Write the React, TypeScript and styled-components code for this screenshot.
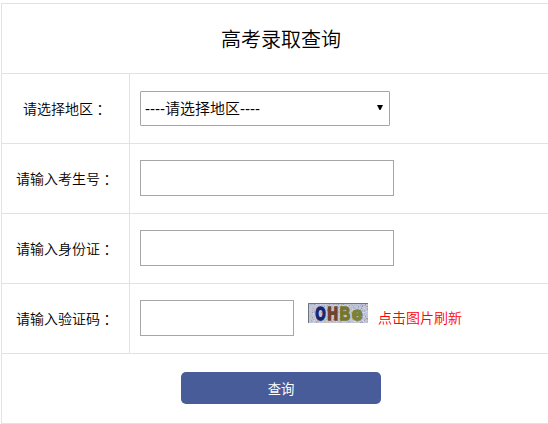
import React from "react";
import styled, { createGlobalStyle } from "styled-components";

const GlobalStyle = createGlobalStyle`
  body {
    margin: 0;
    background: #fff;
    color: #000;
    font-family: "Noto Sans CJK SC", sans-serif;
    font-size: 14px;
    overflow: hidden;
  }
  *, *::before, *::after { box-sizing: border-box; }
`;

const Form = styled.form`
  width: 560px;
  margin: 3px 0 0 1px;
  border: 1px solid #dce1f4;
  border-top: 0;
`;

const Row = styled.div`
  display: flex;
  height: 70px;
  border-top: 1px solid #dce1f4;
`;

const FullRow = styled(Row)`
  align-items: center;
  justify-content: center;
  padding-bottom: 1px;
`;

const Title = styled.h1`
  margin: 0;
  padding-top: 1px;
  font-size: 20px;
  line-height: 30px;
  font-weight: 350;
`;

const Label = styled.label`
  display: flex;
  align-items: center;
  justify-content: center;
  width: 128px;
  padding: 0 1px 1px 0;
  border-right: 1px solid #dce1f4;
  font-weight: 350;
  white-space: nowrap;
`;

const Colon = styled.span`
  font-family: "Noto Sans CJK TC", sans-serif;
  line-height: 0;
  vertical-align: -1px;
`;

const Field = styled.div<{ $lift?: number }>`
  display: flex;
  align-items: center;
  flex: 1;
  padding: 0 0 ${(p) => p.$lift ?? 1}px 10px;
`;

const Input = styled.input<{ $width: number }>`
  width: ${(p) => p.$width}px;
  height: 36px;
  padding: 0 4px;
  border: 1px solid #a6a6a6;
  border-radius: 0;
  background: #fff;
  outline: none;
  font: inherit;
`;

const Select = styled.button`
  display: flex;
  align-items: center;
  justify-content: space-between;
  width: 250px;
  height: 35px;
  padding: 0 6px 0 4px;
  border: 1px solid #a6a6a6;
  border-radius: 1px;
  background: #fff;
  color: #000;
  font: 350 15px/22px "Liberation Sans", "Noto Sans CJK SC", sans-serif;
`;

const Arrow = styled.svg`
  display: block;
  margin-bottom: 2px;
`;

const Captcha = styled.svg`
  display: block;
  flex: none;
  overflow: visible;
  margin: 0 10px 10px 14px;
`;

const Refresh = styled.span`
  padding-bottom: 2px;
  font-weight: 350;
  color: #f00;
  line-height: 20px;
`;

const Submit = styled.button`
  width: 200px;
  height: 32px;
  padding: 2px 0 0;
  border: 0;
  border-radius: 5px;
  background: #485c99;
  color: #fff;
  font: 400 13.33px/20px "Noto Sans CJK SC", sans-serif;
`;

const NOISE = ["#c5cbe0", "#a9b0cb", "#d8dcea", "#b7a9b9", "#aebfc8", "#c9c3b4", "#9299b5", "#bcc7e2"];

const specks = (() => {
  let seed = 4127;
  const next = () => (seed = (seed * 16807) % 2147483647);
  return Array.from({ length: 620 }, () => ({
    x: next() % 60,
    y: next() % 20,
    fill: NOISE[next() % NOISE.length],
  }));
})();

const LETTERS = [
  { ch: "O", x: 7.6, w: 10, fill: "#17246f" },
  { ch: "H", x: 19.6, w: 10.4, fill: "#70432f" },
  { ch: "B", x: 31.8, w: 10.4, fill: "#74762e" },
  { ch: "e", x: 44, w: 10.4, fill: "#7c8138" },
];

const CaptchaImage = () => (
  <Captcha width="60" height="20" viewBox="0 0 60 20">
    <rect width="60" height="20" fill="#c0c6d8" />
    {specks.map((s, i) => (
      <rect key={i} x={s.x} y={s.y} width="1" height="1" fill={s.fill} />
    ))}
    <g
      fontFamily="Liberation Sans, sans-serif"
      fontWeight="700"
      fontSize="18"
      strokeWidth="1.6"
    >
      {LETTERS.map((l) => (
        <text
          key={l.ch}
          x={l.x}
          y="17"
          textLength={l.w}
          lengthAdjust="spacingAndGlyphs"
          fill={l.fill}
          stroke={l.fill}
        >
          {l.ch}
        </text>
      ))}
    </g>
    <path d="M0.5 20V0.5H60" fill="none" stroke="#6f7280" />
  </Captcha>
);

const Caption = ({ text }: { text: string }) => (
  <Label>
    <span>
      {text}
      <Colon lang="zh-TW">：</Colon>
    </span>
  </Label>
);

export default function App() {
  return (
    <>
      <GlobalStyle />
      <Form lang="zh-CN" onSubmit={(e) => e.preventDefault()}>
        <FullRow>
          <Title>高考录取查询</Title>
        </FullRow>
        <Row>
          <Caption text="请选择地区" />
          <Field $lift={0}>
            <Select type="button">
              <span>----请选择地区----</span>
              <Arrow width="6" height="5" viewBox="0 0 6 5">
                <path d="M0 0H6L3.5 5H2.5Z" />
              </Arrow>
            </Select>
          </Field>
        </Row>
        <Row>
          <Caption text="请输入考生号" />
          <Field>
            <Input $width={254} />
          </Field>
        </Row>
        <Row>
          <Caption text="请输入身份证" />
          <Field>
            <Input $width={254} />
          </Field>
        </Row>
        <Row>
          <Caption text="请输入验证码" />
          <Field>
            <Input $width={154} />
            <CaptchaImage />
            <Refresh>点击图片刷新</Refresh>
          </Field>
        </Row>
        <FullRow>
          <Submit type="submit">查询</Submit>
        </FullRow>
      </Form>
    </>
  );
}
